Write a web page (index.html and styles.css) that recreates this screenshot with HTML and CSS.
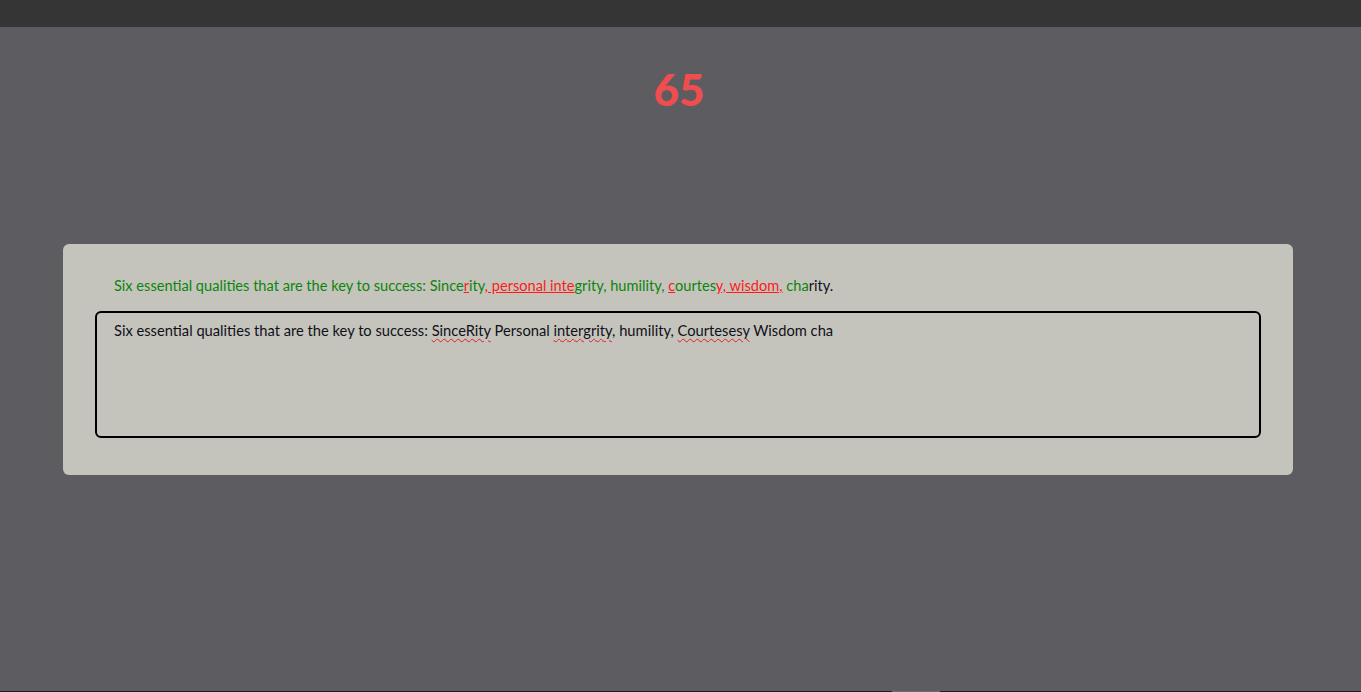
FILE: index.html
```html
<!DOCTYPE html>
<html>
<head>
<meta charset="utf-8">
<link rel="stylesheet" href="styles.css">
</head>
<body>
<div class="topbar"></div>
<main class="main">
  <div class="score">65</div>
  <section class="card">
    <p class="prompt"><span class="ok">Six essential qualities that are the key to success: Since</span><span class="bad">r</span><span class="ok">ity</span><span class="bad">, personal inte</span><span class="ok">grity, humility, </span><span class="bad">c</span><span class="ok">ourtes</span><span class="bad">y, wisdom,</span><span class="ok"> cha</span><span class="rest">rity.</span></p>
    <div class="input">Six essential qualities that are the key to success: <span class="sp">SinceRity</span> Personal <span class="sp">intergrity</span>, humility, <span class="sp">Courtesesy</span> Wisdom cha</div>
  </section>
</main>
<div class="bottombar"><div class="thumb"></div></div>
</body>
</html>
```
FILE: styles.css
```css
html, body {
  margin: 0;
  padding: 0;
  height: 100%;
}
body {
  background: #5d5c61;
  font-family: Lato, "Open Sans", sans-serif;
  display: flex;
  flex-direction: column;
  overflow: hidden;
}
.topbar {
  height: 27px;
  background: #353535;
  flex: none;
}
.main {
  flex: 1;
  display: flex;
  flex-direction: column;
  align-items: center;
}
.score {
  margin-top: 35px;
  font-size: 44px;
  font-weight: 900;
  color: #f04d4f;
  line-height: 54px;
  height: 54px;
  margin-right: 3px;
}
.card {
  margin-top: 128px;
  width: 1230px;
  box-sizing: border-box;
  background: #c5c4bc;
  border-radius: 6px;
  padding: 32px 32px 37px 32px;
  align-self: flex-start;
  margin-left: 63px;
}
.prompt {
  margin: 0 0 16px 19px;
  font-size: 14.6px;
  line-height: 19px;
}
.ok { color: #0b850b; }
.bad { color: #ff1a1a; text-decoration: underline; }
.rest { color: #111122; }
.input {
  height: 127px;
  box-sizing: border-box;
  border: 2px solid #000;
  border-radius: 6px;
  padding: 8px 17px;
  font-size: 14.7px;
  line-height: 19px;
  color: #10101a;
}
.sp {
  text-decoration: underline wavy #e02020;
  text-decoration-thickness: 1px;
  text-underline-offset: 2px;
}
.bottombar {
  height: 1px;
  background: #1e1e1e;
  position: relative;
  flex: none;
}
.thumb {
  position: absolute;
  left: 892px;
  width: 48px;
  height: 1px;
  background: #6c6c70;
}
```
